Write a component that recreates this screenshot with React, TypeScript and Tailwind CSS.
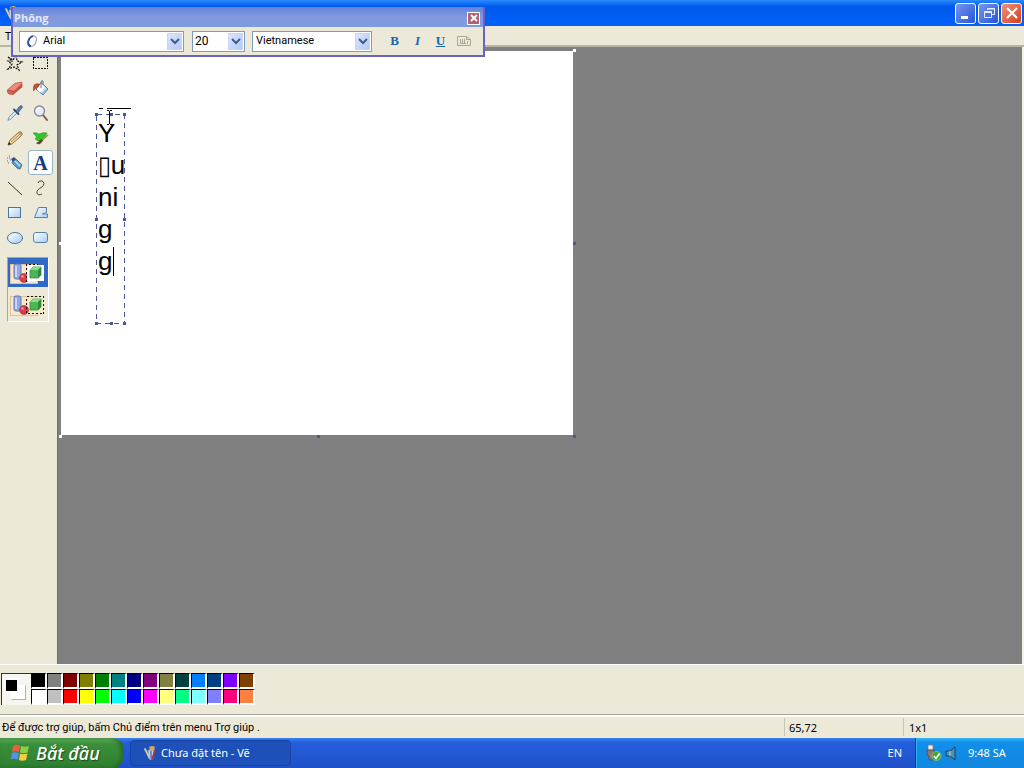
import { useState } from 'react'
import type { ReactNode } from 'react'
import { clsx } from 'clsx'

interface ToolItem {
  id: string
  label: string
  icon: ReactNode
}

const ICON = 'h-5 w-5'

const TOOLS: ToolItem[] = [
  {
    id: 'free-select',
    label: 'Free-form select',
    icon: (
      <svg className={ICON} viewBox="0 0 20 20" fill="none" stroke="#111" strokeWidth="1.2" strokeDasharray="2 1">
        <path d="M3 4l5 3 3-5 1 6 5 1-5 3 2 5-5-3-6 2 4-5-4-3 4 0z" />
      </svg>
    ),
  },
  {
    id: 'select',
    label: 'Select',
    icon: (
      <svg className={ICON} viewBox="0 0 20 20" fill="none" stroke="#111" strokeDasharray="2 1" shapeRendering="crispEdges">
        <rect x="2.5" y="4.5" width="14" height="11" />
      </svg>
    ),
  },
  {
    id: 'eraser',
    label: 'Eraser',
    icon: (
      <svg className={ICON} viewBox="0 0 20 20" stroke="#b5483c" strokeWidth=".7" strokeLinejoin="round">
        <path d="M2.500 12l7-6.500 7-1.500q1.500.500 0 2L9 13.500z" fill="#f08a78" />
        <path d="M2.500 12L9 13.500 8 16.500l-4-.500q-2-1-1.500-4z" fill="#e0604f" />
        <path d="M9 13.500l8-7.500v3l-9 7.500z" fill="#c94f41" />
      </svg>
    ),
  },
  {
    id: 'fill',
    label: 'Fill with color',
    icon: (
      <svg className={ICON} viewBox="0 0 20 20" strokeLinejoin="round">
        <path d="M10 4.500l7 6.500-5 6-7-6z" fill="#d7e9fa" stroke="#56718c" />
        <path d="M10 5.500l4 3.500-5 5.500-3-3z" fill="#fff" />
        <path d="M10 10V4q.500-2 2-1v4" fill="none" stroke="#667788" />
        <path d="M8 6Q3 5 2.500 9v4l2.500-3 3-2z" fill="#d94a35" stroke="#9e3226" strokeWidth=".6" />
        <path d="M11 15l4-4.500 1.500.500-4.500 5.500z" fill="#8fbce6" />
      </svg>
    ),
  },
  {
    id: 'picker',
    label: 'Pick color',
    icon: (
      <svg className={ICON} viewBox="0 0 20 20" strokeLinecap="round">
        <path d="M3 17l1-3 6-6 2 2-6 6z" fill="#cfe6fa" stroke="#6689a8" strokeWidth=".8" />
        <path d="M9 6.500l4.500 4.500" stroke="#2b4775" strokeWidth="1.800" />
        <path d="M11 8l3-4q2-2 3-1 1 2-1 3l-3 4z" fill="#5f80b4" stroke="#3a5688" strokeWidth=".8" />
      </svg>
    ),
  },
  {
    id: 'magnifier',
    label: 'Magnifier',
    icon: (
      <svg className={ICON} viewBox="0 0 20 20" strokeLinecap="round">
        <path d="M12 12l4 5" stroke="#7a5650" strokeWidth="2" />
        <circle cx="8.500" cy="8" r="5" fill="#e4eef8" stroke="#83869a" strokeWidth="1.300" />
        <path d="M5.500 8q0-3 3-3" fill="none" stroke="#fff" strokeWidth="1.400" />
      </svg>
    ),
  },
  {
    id: 'pencil',
    label: 'Pencil',
    icon: (
      <svg className={ICON} viewBox="0 0 20 20" strokeLinejoin="round">
        <path d="M3 17l2-5L14 4q2-1 3 1 1 1-1 3l-9 8z" fill="#f2dba2" stroke="#7d6332" strokeWidth=".9" />
        <path d="M6 14l9-8" stroke="#b18c3d" />
        <path d="M13 5l3 3 1-2-2-2z" fill="#d28b7c" />
        <path d="M3 17l1-3 2 2z" fill="#222" />
      </svg>
    ),
  },
  {
    id: 'brush',
    label: 'Brush',
    icon: (
      <svg className={ICON} viewBox="0 0 20 20" strokeLinejoin="round">
        <path d="M2 5q3-1 6 1 4-2 8-1l-2 4-3 4q-4 1-7-2 2-1 1-3z" fill="#35c22e" stroke="#259a27" strokeWidth=".6" />
        <path d="M10 13l7-6" stroke="#a98b5b" strokeWidth="1.500" />
        <path d="M5 15q3-1 4-3l2-1 1 2-3 3q-2 1-4-1z" fill="#5e4a2c" />
      </svg>
    ),
  },
  {
    id: 'airbrush',
    label: 'Airbrush',
    icon: (
      <svg className={ICON} viewBox="0 0 20 20">
        <path d="M8 7l3-1 6 6-2 4q-2 0-3-1l-5-5z" fill="#5c9bc8" stroke="#35617f" strokeWidth=".8" />
        <path d="M10 8l5 5" stroke="#c2e2f5" strokeWidth="1.400" />
        <path d="M6 6l3-2 2 2-3 3z" fill="#31527c" />
        <path d="M2 5h1m1-2h1m0 4h1m-4 1h1m1-3h1m-2 5h1" stroke="#416fa6" strokeWidth="1.200" />
      </svg>
    ),
  },
  {
    id: 'text',
    label: 'Text',
    icon: <span className="font-['Liberation_Serif',serif] text-[20px] leading-5 font-bold text-[#123a86]">A</span>,
  },
  {
    id: 'line',
    label: 'Line',
    icon: (
      <svg className={ICON} viewBox="0 0 20 20" stroke="#333">
        <path d="M3 4l14 13" />
      </svg>
    ),
  },
  {
    id: 'curve',
    label: 'Curve',
    icon: (
      <svg className={ICON} viewBox="0 0 20 20" stroke="#444" fill="none">
        <path d="M7 5q1-3 4-2 4 2 0 6-6 3-5 6 1 3 5 1" />
      </svg>
    ),
  },
  {
    id: 'rectangle',
    label: 'Rectangle',
    icon: (
      <svg className={ICON} viewBox="0 0 20 20" fill="url(#glass)" stroke="#4a7498">
        <rect x="3.500" y="4.500" width="12" height="10" />
      </svg>
    ),
  },
  {
    id: 'polygon',
    label: 'Polygon',
    icon: (
      <svg className={ICON} viewBox="0 0 20 20" fill="url(#glass)" stroke="#5880a0">
        <path d="M3.500 14.500l4-10h8v5l-4 1.500h5v3.500z" />
      </svg>
    ),
  },
  {
    id: 'ellipse',
    label: 'Ellipse',
    icon: (
      <svg className={ICON} viewBox="0 0 20 20" fill="url(#glass)" stroke="#4a7498">
        <ellipse cx="10" cy="10" rx="7.500" ry="5.500" />
      </svg>
    ),
  },
  {
    id: 'rounded',
    label: 'Rounded rectangle',
    icon: (
      <svg className={ICON} viewBox="0 0 20 20" fill="url(#glass)" stroke="#5880a0">
        <rect x="2.500" y="4.500" width="14" height="10" rx="2.500" />
      </svg>
    ),
  },
]

const PALETTE = [
  ['#000000', '#808080', '#800000', '#808000', '#008000', '#008080', '#000080', '#800080', '#808040', '#004040', '#0080ff', '#004080', '#8000ff', '#804000'],
  ['#ffffff', '#c0c0c0', '#ff0000', '#ffff00', '#00ff00', '#00ffff', '#0000ff', '#ff00ff', '#ffff80', '#00ff80', '#80ffff', '#8080ff', '#ff0080', '#ff8040'],
]

function PaintLogo() {
  return (
    <svg className="h-4 w-4 shrink-0" viewBox="0 0 16 16" strokeLinecap="round">
      <path d="M5 5l6-1-1 10q-2 2-4 0z" fill="#b9d4f2" stroke="#5776a8" strokeWidth=".6" />
      <path d="M2 4l4 8" stroke="#d9c6a4" strokeWidth="1.800" />
      <path d="M12 6l-3 8" stroke="#a33c2c" strokeWidth="1.800" />
      <path d="M6 2q4-2 6 0l-1 4-4-1z" fill="#dca35a" />
      <path d="M8 6v7" stroke="#3059a4" strokeWidth="1.200" />
    </svg>
  )
}

function OptionIcon({ opaque }: { opaque: boolean }) {
  return (
    <svg className="h-6 w-9" viewBox="0 0 36 24">
      <rect x="1.500" y="3.500" width="27" height="19" fill="#f9e8cb" stroke="#dfc298" />
      <rect x="18" y="4" width="17" height="16" fill="#f7edbe" />
      <rect x="5" y="3" width="7" height="15" rx="2" fill="#93a9e5" stroke="#6276b4" />
      <path d="M7 5v11" stroke="#dce5ff" strokeWidth="1.500" />
      <circle cx="15" cy="17" r="4.500" fill="#d83d48" stroke="#a8232e" strokeWidth=".6" />
      <circle cx="13.500" cy="15.500" r="1.300" fill="#f6949a" />
      {opaque && <rect x="18" y="4" width="17" height="16" fill="#fff" />}
      <path d="M21 9l3-3h8v8l-3 3h-8z" fill="#4cb558" stroke="#3a8a45" strokeWidth=".8" />
      <path d="M21 9l3-3h8l-3 3z" fill="#8bdc8c" />
      <path d="M29 9l3-3v8l-3 3z" fill="#2d8b3d" />
      <path
        d={opaque ? 'M17.500 21V3.500H29' : 'M17.500 3.500h17v17h-17z'}
        fill="none"
        stroke="#111"
        strokeDasharray="2 2"
        shapeRendering="crispEdges"
      />
    </svg>
  )
}

interface ComboProps {
  label: string
  options: string[]
  className: string
  selectClassName: string
  children?: ReactNode
}

function Combo({ label, options, className, selectClassName, children }: ComboProps) {
  return (
    <div className={clsx('relative flex h-[21px] items-center border border-[#7f9db9] bg-white', className)}>
      {children}
      <select
        aria-label={label}
        className={clsx("h-full w-full appearance-none bg-transparent font-['Roboto',sans-serif] outline-none", selectClassName)}
      >
        {options.map((o) => (
          <option key={o}>{o}</option>
        ))}
      </select>
      <span className="pointer-events-none absolute top-px right-px bottom-px flex w-[15px] items-center justify-center border border-[#c6d5f8] bg-linear-to-br from-[#dbe6ff] to-[#b2c8f6]">
        <svg className="h-2 w-2.5" viewBox="0 0 10 8" fill="none" stroke="#455b84" strokeWidth="2">
          <path d="M1 2l4 4 4-4" />
        </svg>
      </span>
    </div>
  )
}

function FontToolbar() {
  return (
    <section className="absolute top-[7px] left-[11px] z-20 flex h-[50px] w-[474px] flex-col border-x-2 border-b-2 border-[#6862c4] bg-[#ece9d8]">
      <div className="flex h-5 items-center justify-between bg-linear-to-b from-[#6382de] via-[#8399dd] to-[#7d9be2] pt-0.5 pr-[3px] pl-px">
        <h2 className="font-['Open_Sans',sans-serif] text-[11px] font-bold text-[#e2eafb]">Phông</h2>
        <button aria-label="Close fonts" className="flex h-[13px] w-[13px] items-center justify-center border border-white bg-[#b06377]">
          <svg className="h-2 w-2" viewBox="0 0 8 8" stroke="#fff" strokeWidth="1.800">
            <path d="M1 1l6 6M7 1L1 7" />
          </svg>
        </button>
      </div>
      <div className="flex flex-1 items-center pl-1.5">
        <Combo label="Font" options={['Arial']} className="w-[165px]" selectClassName="pl-[5px] text-[11px]">
          <svg className="ml-1.5 h-3.5 w-3 shrink-0" viewBox="0 0 12 14" fill="none">
            <ellipse cx="6.500" cy="7" rx="3.600" ry="5.500" transform="rotate(20 6.500 7)" stroke="#a3abb8" strokeWidth="1.400" />
            <path d="M7 2Q2 4 2 9q.500 3 3 3.300" stroke="#294b9a" strokeWidth="1.800" />
          </svg>
        </Combo>
        <Combo label="Font size" options={['20']} className="ml-2 w-[53px]" selectClassName="pl-0.5 text-xs" />
        <Combo label="Script" options={['Vietnamese']} className="ml-[7px] w-[120px]" selectClassName="pl-[3px] text-[11px]" />
        <div className="ml-[11px] flex font-['Liberation_Serif',serif] text-[13px] font-bold text-[#1668b5]">
          <button aria-label="Bold" className="w-[23px]">B</button>
          <button aria-label="Italic" className="w-[23px] italic">I</button>
          <button aria-label="Underline" className="w-[23px] underline">U</button>
          <button aria-label="Vertical text" className="flex w-[23px] items-center justify-center">
            <svg className="h-3 w-3.5" viewBox="0 0 14 12" fill="none" stroke="#aaa797">
              <path d="M.5 1.500h9l4 3v6H.5zM9.500 1.500v3h4M3.500 4v4M5.500 4v4M7.500 4v4M10.500 6v3M3 8.500h6" />
            </svg>
          </button>
        </div>
      </div>
    </section>
  )
}

const CAPTION_BTN = 'flex h-[21px] w-[21px] items-center justify-center rounded-[3px] border border-white bg-linear-to-br'

function TitleBar() {
  return (
    <header className="flex h-[26px] shrink-0 items-center justify-between bg-linear-to-b from-[#2a8bff] from-0% via-[#0058ee] via-25% to-[#0062fb] pr-0.5 pl-1">
      <PaintLogo />
      <div className="flex gap-0.5">
        <button aria-label="Minimize" className={clsx(CAPTION_BTN, 'from-[#7796ef] to-[#2452d8]')}>
          <svg className="h-4 w-4" viewBox="0 0 16 16">
            <rect x="3" y="11" width="7" height="3" fill="#fff" />
          </svg>
        </button>
        <button aria-label="Restore" className={clsx(CAPTION_BTN, 'from-[#7796ef] to-[#2452d8]')}>
          <svg className="h-4 w-4" viewBox="0 0 16 16" fill="none" stroke="#e8eeff">
            <path d="M6.500 5V3.500h7v6H11M6.500 4h7" />
            <path d="M3.500 6.500h7v6h-7zM3.500 7.500h7" />
          </svg>
        </button>
        <button aria-label="Close" className={clsx(CAPTION_BTN, 'from-[#f0907a] to-[#d23c12]')}>
          <svg className="h-4 w-4" viewBox="0 0 16 16" stroke="#fff" strokeWidth="2.200">
            <path d="M3 3l10 10M13 3L3 13" />
          </svg>
        </button>
      </div>
    </header>
  )
}

function ToolBox() {
  const [tool, setTool] = useState('text')
  const [opaque, setOpaque] = useState(true)

  return (
    <aside className="w-[57px] shrink-0 bg-[#ece9d8] pt-[3px] pl-0.5">
      <div className="grid auto-rows-[25px] grid-cols-[26px_25px]">
        {TOOLS.map((t) => (
          <button
            key={t.id}
            aria-label={t.label}
            aria-pressed={tool === t.id}
            onClick={() => setTool(t.id)}
            className={clsx(
              'flex items-center justify-center rounded-[3px] border',
              tool === t.id ? 'border-[#98b5c6] bg-white' : 'border-transparent',
            )}
          >
            {t.icon}
          </button>
        ))}
      </div>
      <div className="mt-[7px] ml-[5px] flex h-[65px] w-[42px] flex-col gap-[3px] border border-t-[#aca899] border-r-white border-b-white border-l-[#aca899]">
        {[true, false].map((o) => (
          <button
            key={String(o)}
            aria-label={o ? 'Opaque background' : 'Transparent background'}
            aria-pressed={opaque === o}
            onClick={() => setOpaque(o)}
            className={clsx('flex h-[29px] items-center pl-px', opaque === o && 'bg-[#316ac5]')}
          >
            <OptionIcon opaque={o} />
          </button>
        ))}
      </div>
    </aside>
  )
}

const BOX_HANDLES = [
  'top-[-1px] left-[-1px]',
  'top-[-1px] left-[14px]',
  'top-[-1px] right-0',
  'top-[104px] left-[-1px]',
  'top-[104px] right-0',
  'bottom-[-1px] left-[-1px]',
  'bottom-[-1px] left-[14px]',
  'bottom-[-1px] right-0',
]

const PAGE_HANDLES = [
  'top-[-2px] right-[-3px] bg-white',
  'top-[191px] left-[-2px] bg-white',
  'top-[191px] right-[-3px] bg-[#4c5a98]',
  'bottom-[-3px] left-[-2px] bg-white',
  'bottom-[-3px] left-1/2 bg-[#4c5a98]',
  'bottom-[-3px] right-[-3px] bg-[#4c5a98]',
]

function Workspace() {
  return (
    <main className="min-w-0 flex-1 border-r-2 border-l border-r-[#f4f2e8] border-l-[#6f6e6a] bg-[#808080] pt-1 pl-[3px]">
      <div className="relative h-[384px] w-[512px] bg-white">
        {PAGE_HANDLES.map((h) => (
          <span key={h} className={clsx('absolute h-[3px] w-[3px]', h)} />
        ))}
        <div className="absolute top-[63px] left-[35px] h-[210px] w-[30px]">
          <svg className="absolute inset-0 h-full w-full" fill="none" stroke="#4c5799" strokeDasharray="5 4" shapeRendering="crispEdges">
            <rect x=".5" y=".5" width="28" height="209" />
          </svg>
          <textarea
            aria-label="Text"
            spellCheck={false}
            defaultValue={'Y\n\u25afu\nni\ng\ng'}
            className="absolute inset-0 block h-full w-full resize-none overflow-hidden bg-transparent pt-[3px] pl-0.5 font-['Liberation_Sans','DejaVu_Sans_Condensed','DejaVu_Sans',sans-serif] text-[26px] leading-8 whitespace-pre text-black outline-none"
          />
          <span className="absolute top-[133px] left-[17px] h-[29px] w-px bg-black" />
          {BOX_HANDLES.map((h) => (
            <span key={h} className={clsx('pointer-events-none absolute h-[3px] w-[3px] bg-[#4b5697]', h)} />
          ))}
        </div>
        <svg className="pointer-events-none absolute top-[56px] left-[37px] h-5 w-9" viewBox="0 0 36 20" stroke="#000" fill="none" shapeRendering="crispEdges">
          <path d="M1 1.500h4M9 1.500h24" />
          <path d="M9 3.500h2M12 3.500h2M11.500 4v13M9 17.500h2M12 17.500h2" />
        </svg>
      </div>
    </main>
  )
}

function ColorBox() {
  const [color, setColor] = useState('#000000')

  return (
    <div className="flex h-[50px] shrink-0 items-start border-t border-white bg-[#ece9d8] pt-2 pl-px">
      <div className="relative h-8 w-[30px] border-t border-l border-t-[#33322e] border-l-[#33322e] bg-[#f7f5f0]">
        <span className="absolute top-[11px] left-[9px] h-[15px] w-[15px] border border-t-white border-r-[#b5b2a4] border-b-[#b5b2a4] border-l-white bg-white" />
        <span className="absolute top-1 left-[2px] h-[15px] w-[15px] border border-white p-px">
          <span className="block h-full w-full" style={{ backgroundColor: color }} />
        </span>
      </div>
      <div className="flex flex-col">
        {PALETTE.map((row, i) => (
          <div key={i} className="flex">
            {row.map((c) => (
              <button
                key={c}
                aria-label={c}
                onClick={() => setColor(c)}
                style={{ backgroundColor: c }}
                className="h-4 w-4 border-t border-r-2 border-b-2 border-l border-t-black border-r-white border-b-white border-l-black"
              />
            ))}
          </div>
        ))}
      </div>
    </div>
  )
}

function StatusBar() {
  return (
    <footer className="flex h-6 shrink-0 items-center border-t border-[#aca899] bg-[#ece9d8] shadow-[inset_0_2px_0_#fff]">
      <p className="min-w-0 flex-1 pt-0.5 pl-0.5 font-['Roboto',sans-serif]">Để được trợ giúp, bấm Chủ điểm trên menu Trợ giúp .</p>
      <p className="w-[119px] border-l border-[#c9c5b2] pt-0.5 pl-1">65,72</p>
      <p className="w-[121px] border-l border-[#c9c5b2] pt-0.5 pl-[5px]">1x1</p>
    </footer>
  )
}

function TaskBar() {
  return (
    <nav className="flex h-[30px] shrink-0 items-stretch bg-linear-to-b from-[#3a80ee] from-0% via-[#245edb] via-15% to-[#1f50c8] text-white">
      <button className="flex w-[124px] items-center gap-1.5 rounded-r-xl bg-linear-to-b from-[#67b465] from-0% via-[#3a8f3a] via-20% to-[#2f7f30] pl-2.5 shadow-[inset_-3px_0_4px_#256a27]">
        <svg className="h-5 w-5" viewBox="0 0 20 20">
          <path d="M3 3q3-2 7-.500L9 9q-4-1.500-7 0z" fill="#e8613a" />
          <path d="M11 3q4 1.500 8 0l-1.500 6.500q-4 1.500-7.500 0z" fill="#8fce48" />
          <path d="M1.800 10q3-1.500 7 0l-1 6.500q-4-1.500-7 0z" fill="#5b8cf0" />
          <path d="M10 10.500q3.500 1.500 7.500 0L16 17q-4 1.500-7 0z" fill="#f5d03e" />
        </svg>
        <span className="font-['Noto_Sans',sans-serif] text-lg leading-6 font-medium italic [text-shadow:1px_1px_1px_#174d19]">Bắt đầu</span>
      </button>
      <button className="my-0.5 ml-1.5 flex w-[161px] items-center gap-0.5 rounded-sm border border-[#1943a2] bg-[#1e50b9] pl-3">
        <PaintLogo />
        Chưa đặt tên - Vẽ
      </button>
      <span className="ml-auto flex items-center pr-[13px]">EN</span>
      <div className="flex w-[109px] items-center border-l border-[#0b3c92] bg-linear-to-b from-[#35b3f5] from-0% via-[#118fea] via-15% to-[#1187e0] pl-2 shadow-[inset_1px_0_0_#2fb4f3]">
        <svg className="h-[18px] w-[18px]" viewBox="0 0 18 18">
          <path d="M4 1h5v5H4z" fill="#ececec" stroke="#777" strokeWidth=".7" />
          <path d="M3 6h7v4l-1 3v3H5v-3l-2-3z" fill="#8b7875" stroke="#504c4b" strokeWidth=".8" />
          <circle cx="12.500" cy="12" r="4.500" fill="#3ba82d" stroke="#a5df93" strokeWidth=".6" />
          <path d="M10 12l2 2.500 3.500-5" stroke="#fff" strokeWidth="1.600" fill="none" />
        </svg>
        <svg className="ml-0.5 h-4 w-4" viewBox="0 0 16 16" fill="#4f91b0" stroke="#213f5c" strokeLinejoin="round">
          <path d="M2 6h4l5-4v13l-5-4H2z" />
          <path d="M6 6v5" stroke="#b3dcec" />
        </svg>
        <time className="ml-2">9:48 SA</time>
      </div>
    </nav>
  )
}

export default function App() {
  return (
    <div className="relative flex min-h-screen flex-col overflow-hidden bg-[#ece9d8] font-['Noto_Sans',sans-serif] text-[11px] leading-4 text-black">
      <svg className="absolute h-0 w-0" aria-hidden="true">
        <linearGradient id="glass" x2="1" y2="1">
          <stop stopColor="#fff" />
          <stop offset="1" stopColor="#a5ccf5" />
        </linearGradient>
      </svg>
      <TitleBar />
      <div className="flex h-[21px] shrink-0 items-center border-b-2 border-b-[#b8b5a8] pl-[5px]">
        <button>T</button>
      </div>
      <FontToolbar />
      <div className="flex flex-1">
        <ToolBox />
        <Workspace />
      </div>
      <ColorBox />
      <StatusBar />
      <TaskBar />
    </div>
  )
}
